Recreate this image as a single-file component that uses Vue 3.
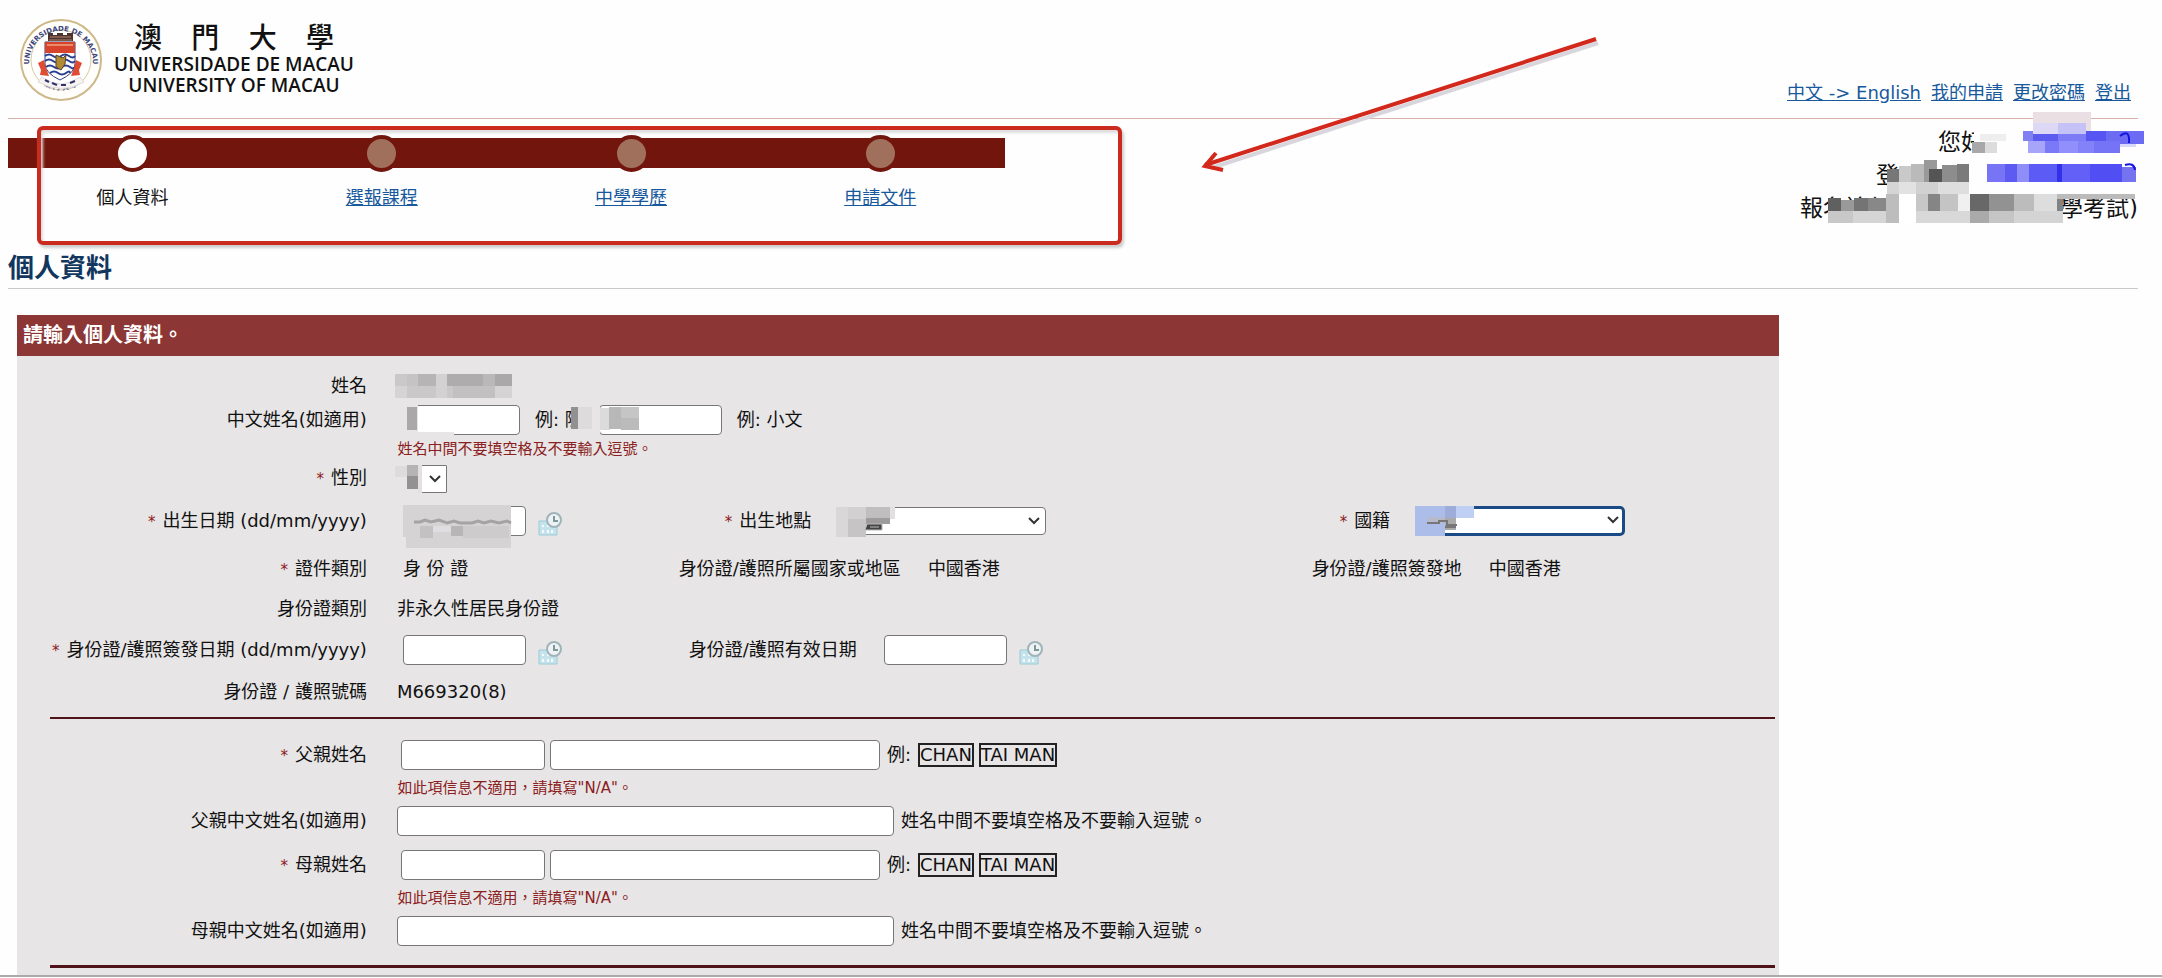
<template>
  <div class="page" lang="zh-Hant">
    <!-- Header with logo and account links -->
    <header class="header">
      <div class="logo">
        <svg class="seal" viewBox="0 0 84 84" aria-hidden="true">
          <defs>
            <path id="seal-top" d="M10 45 A32 32 0 1 1 74 45" />
            <path id="seal-bottom" d="M14 58 A35 35 0 0 0 70 58" />
          </defs>
          <circle cx="42" cy="42" r="40" fill="#fffefa" stroke="#cdb98a" stroke-width="2" />
          <circle cx="42" cy="42" r="30" fill="#fff" stroke="#d8c8a2" stroke-width="1" />
          <text class="seal-latin"><textPath href="#seal-top" startOffset="50%" text-anchor="middle">UNIVERSIDADE DE MACAU</textPath></text>
          <text class="seal-han"><textPath href="#seal-bottom" startOffset="50%" text-anchor="middle">澳 門 大 學</textPath></text>
          <path d="M29 15 h5 v2 h4 v-2 h6 v2 h4 v-2 h6 v8 h-25 z" fill="#4a3330" />
          <path d="M31 19 h21 M30 22 h23" stroke="#b9836b" stroke-width="1" />
          <path d="M26 24 h30 v22 q0 9 -15 16 q-15 -7 -15 -16 z" fill="#fff" stroke="#33407c" />
          <path d="M26 24 h30 v11 h-30 z" fill="#d8432c" />
          <path d="M28 27 h26" stroke="#ec8b6c" stroke-width="2" />
          <path d="M26 38 q4 -3 8 0 t8 0 t8 0 t6 0 M26 43 q4 -3 8 0 t8 0 t8 0 t6 0 M27 49 q4 -3 8 0 t8 0 t8 0 t4 0 M31 55 q4 -3 8 0 t8 0 t4 0" fill="none" stroke="#2b3f92" stroke-width="2" />
          <path d="M37 37 l7 3 l3 -3 l-1 9 l-4 6 l-5 -3 z" fill="#b28a35" stroke="#594222" />
          <path d="M19 45 l6 -3 l2 8 l3 8 l-9 -1 l1 -5 z M63 45 l-6 -3 l-2 8 l-3 8 l9 -1 l-1 -5 z" fill="#df4c31" />
          <path d="M23 59 q18 14 38 0 l4 5 q-22 13 -46 0 z" fill="#f6f3f1" stroke="#dddae0" />
          <path d="M26 62 l4 2 M33 65 l5 2 M42 67 h5 M51 65 l5 -2" stroke="#33336c" stroke-width="2" />
        </svg>
        <div class="logo-text">
          <div class="logo-han">
            <span>澳</span><span>門</span><span>大</span><span>學</span>
          </div>
          <div class="logo-latin">UNIVERSIDADE DE MACAU</div>
          <div class="logo-latin">UNIVERSITY OF MACAU</div>
        </div>
      </div>
      <nav class="links">
        <a v-for="link in links" :key="link" href="#">{{ link }}</a>
      </nav>
    </header>

    <!-- Progress steps and account info -->
    <div class="status">
      <ol class="steps">
        <li v-for="(step, index) in steps" :key="step">
          <span class="track"><span class="dot" :class="{ current: index === 0 }"></span></span>
          <span v-if="index === 0" class="step-name">{{ step }}</span>
          <a v-else class="step-name" href="#">{{ step }}</a>
        </li>
      </ol>
      <div class="account">
        <p class="account-name">您好</p>
        <p class="account-login">登</p>
        <p class="account-exam"><span>報名途徑</span><span>學考試)</span></p>
        <svg class="account-mask" viewBox="0 0 358 112" aria-hidden="true">
          <rect v-for="(c, i) in masks.account" :key="i" :x="c[0]" :y="c[1]" :width="c[2]" :height="c[3]" :fill="c[4]" />
          <path d="M328 24 q10 -8 9 7 M333 53 q9 -3 10 5" fill="none" stroke="#1414e0" stroke-width="2" />
        </svg>
      </div>
    </div>

    <h1 class="title">個人資料</h1>

    <form class="panel" @submit.prevent>
      <h2 class="panel-head">請輸入個人資料。</h2>
      <div class="panel-body">
        <div class="row short">
          <span class="label">姓名</span>
          <div class="value wide">
            <svg class="mask-name" viewBox="0 0 117 24" aria-hidden="true">
              <rect v-for="(c, i) in masks.name" :key="i" :x="c[0]" :y="c[1]" :width="c[2]" :height="c[3]" :fill="c[4]" />
            </svg>
          </div>
        </div>

        <div class="row names">
          <label class="label" for="surname">中文姓名(如適用)</label>
          <div class="value wide">
            <span class="covered">
              <input id="surname" v-model="form.surname" class="w-date" type="text" />
              <svg class="mask" viewBox="0 0 60 40" aria-hidden="true">
                <rect v-for="(c, i) in masks.surname" :key="i" :x="c[0]" :y="c[1]" :width="c[2]" :height="c[3]" :fill="c[4]" />
              </svg>
            </span>
            <span class="example">例: 陳</span>
            <span class="covered given">
              <input v-model="form.givenName" class="w-date" type="text" aria-label="名" />
              <svg class="mask mask-given" viewBox="0 0 80 40" aria-hidden="true">
                <rect v-for="(c, i) in masks.given" :key="i" :x="c[0]" :y="c[1]" :width="c[2]" :height="c[3]" :fill="c[4]" />
              </svg>
            </span>
            <span class="example">例: 小文</span>
          </div>
        </div>
        <p class="hint">姓名中間不要填空格及不要輸入逗號。</p>

        <div class="row names">
          <label class="label" for="gender"><i>*</i>性別</label>
          <div class="value wide">
            <span class="covered select">
              <select id="gender" v-model="form.gender" class="w-gender"><option value=""></option></select>
              <svg class="arrow" viewBox="0 0 14 8" aria-hidden="true"><path d="M2 1 l5 5 l5 -5" /></svg>
              <svg class="mask" viewBox="0 0 60 40" aria-hidden="true">
                <rect v-for="(c, i) in masks.gender" :key="i" :x="c[0]" :y="c[1]" :width="c[2]" :height="c[3]" :fill="c[4]" />
              </svg>
            </span>
          </div>
        </div>

        <div class="row tall">
          <label class="label" for="birth"><i>*</i>出生日期 (dd/mm/yyyy)</label>
          <div class="value indent">
            <span class="covered">
              <input id="birth" v-model="form.birthDate" class="w-date" type="text" />
              <svg class="mask mask-birth" viewBox="0 0 124 50" aria-hidden="true">
                <rect v-for="(c, i) in masks.birth" :key="i" :x="c[0]" :y="c[1]" :width="c[2]" :height="c[3]" :fill="c[4]" />
                <path d="M11 21 h6 l5 -2 l6 2 l8 -2 l8 3 l7 -2 l6 2 h12 l6 -2 l6 2 l7 -2 l8 2 l8 -2 l4 2" fill="none" stroke="#a5a3a4" stroke-width="3" />
              </svg>
            </span>
            <button type="button" class="calendar" aria-label="選擇日期">
              <svg viewBox="0 0 24 24"><path class="cal" d="M1 9 h18 v14 h-18 z" /><path class="cal-dots" d="M5 13 v2 M10 13 v2 M5 18 v3 M10 18 v3 M14 18 v3" /><circle cx="16" cy="8" r="7" /><path class="hand" d="M16 4 v5 h4" /></svg>
            </button>
          </div>
          <div class="segment shift-large">
            <label for="place"><i>*</i>出生地點</label>
            <span class="covered select">
              <select id="place" v-model="form.birthPlace" class="w-place"><option value=""></option></select>
              <svg class="arrow" viewBox="0 0 14 8" aria-hidden="true"><path d="M2 1 l5 5 l5 -5" /></svg>
              <svg class="mask" viewBox="0 0 60 40" aria-hidden="true">
                <rect v-for="(c, i) in masks.place" :key="i" :x="c[0]" :y="c[1]" :width="c[2]" :height="c[3]" :fill="c[4]" />
                <path d="M31 22 h15 v6 h-17 z M34 25 h9" fill="#444" stroke="#bbb" />
              </svg>
            </span>
          </div>
          <div class="segment shift-medium">
            <label for="nation"><i>*</i>國籍</label>
            <span class="covered select">
              <select id="nation" v-model="form.nationality" class="w-place focused"><option value=""></option></select>
              <svg class="arrow" viewBox="0 0 14 8" aria-hidden="true"><path d="M2 1 l5 5 l5 -5" /></svg>
              <svg class="mask" viewBox="0 0 60 40" aria-hidden="true">
                <rect v-for="(c, i) in masks.nation" :key="i" :x="c[0]" :y="c[1]" :width="c[2]" :height="c[3]" :fill="c[4]" />
                <path d="M12 22 h12 v-2 h8 v4 h10 M30 26 h11" fill="none" stroke="#777" stroke-width="2" />
              </svg>
            </span>
          </div>
        </div>

        <div class="row tall">
          <span class="label"><i>*</i>證件類別</span>
          <div class="value indent">身 份 證</div>
          <div class="segment"><span>身份證/護照所屬國家或地區</span><span>中國香港</span></div>
          <div class="segment"><span>身份證/護照簽發地</span><span>中國香港</span></div>
        </div>

        <div class="row short">
          <span class="label">身份證類別</span>
          <div class="value wide">非永久性居民身份證</div>
        </div>

        <div class="row tall dates">
          <label class="label" for="issue"><i>*</i>身份證/護照簽發日期 (dd/mm/yyyy)</label>
          <div class="value indent">
            <input id="issue" v-model="form.issueDate" class="w-date" type="text" />
            <button type="button" class="calendar" aria-label="選擇日期">
              <svg viewBox="0 0 24 24"><path class="cal" d="M1 9 h18 v14 h-18 z" /><path class="cal-dots" d="M5 13 v2 M10 13 v2 M5 18 v3 M10 18 v3 M14 18 v3" /><circle cx="16" cy="8" r="7" /><path class="hand" d="M16 4 v5 h4" /></svg>
            </button>
          </div>
          <div class="segment shift-small">
            <label for="expiry">身份證/護照有效日期</label>
            <span class="date-box">
              <input id="expiry" v-model="form.expiryDate" class="w-date" type="text" />
              <button type="button" class="calendar" aria-label="選擇日期">
                <svg viewBox="0 0 24 24"><path class="cal" d="M1 9 h18 v14 h-18 z" /><path class="cal-dots" d="M5 13 v2 M10 13 v2 M5 18 v3 M10 18 v3 M14 18 v3" /><circle cx="16" cy="8" r="7" /><path class="hand" d="M16 4 v5 h4" /></svg>
              </button>
            </span>
          </div>
        </div>

        <div class="row short">
          <span class="label">身份證 / 護照號碼</span>
          <div class="value wide">M669320(8)</div>
        </div>

        <hr />

        <!-- Parents -->
        <template v-for="parent in parents" :key="parent.id">
          <div class="row parent">
            <label class="label" :for="parent.id"><i>*</i>{{ parent.title }}姓名</label>
            <div class="value wide parent-name">
              <input :id="parent.id" v-model="parent.surname" class="w-surname" type="text" />
              <input v-model="parent.givenName" class="w-given" type="text" :aria-label="parent.title + '名'" />
              <span class="parent-example">例:</span>
              <span class="sample">CHAN</span>
              <span class="sample">TAI MAN</span>
            </div>
          </div>
          <p class="hint">如此項信息不適用，請填寫"N/A"。</p>
          <div class="row parent">
            <label class="label" :for="parent.id + '-zh'">{{ parent.title }}中文姓名(如適用)</label>
            <div class="value wide">
              <input :id="parent.id + '-zh'" v-model="parent.chineseName" class="w-full" type="text" />
              <span class="note">姓名中間不要填空格及不要輸入逗號。</span>
            </div>
          </div>
        </template>

        <hr class="last" />
      </div>
    </form>

    <!-- Red marking around the steps -->
    <div class="highlight"></div>
    <svg class="pointer" viewBox="0 0 410 150" aria-hidden="true">
      <path class="pointer-shadow" d="M401 15 L14 140" />
      <path d="M399 11 L8 137" />
      <path d="M19 125 L8 138 L26 142" />
    </svg>
  </div>
</template>

<script setup>
import { reactive, ref } from 'vue';

const links = ['中文 -> English', '我的申請', '更改密碼', '登出'];
const steps = ['個人資料', '選報課程', '中學學歷', '申請文件'];

const form = reactive({
  surname: '',
  givenName: '',
  gender: '',
  birthDate: '',
  birthPlace: '',
  nationality: '',
  issueDate: '',
  expiryDate: ''
});

const parents = ref([
  { id: 'father', title: '父親', surname: '', givenName: '', chineseName: '' },
  { id: 'mother', title: '母親', surname: '', givenName: '', chineseName: '' }
]);

// Mosaic cells over private data: x, y, width, height, colour
const masks = {
  account: [
    [241, 0, 58, 23, '#eadfe2'], [241, 11, 25, 12, '#dcd8f6'], [266, 11, 28, 12, '#c5c2f7'],
    [182, 20, 17, 14, '#fff'], [188, 22, 26, 7, '#eee'], [180, 30, 13, 11, '#a8a8a8'], [193, 30, 12, 11, '#dcdcdc'],
    [231, 19, 10, 10, '#8180f3'], [241, 22, 25, 8, '#5c5bf0'], [266, 22, 28, 8, '#7d7cf6'], [294, 19, 20, 10, '#5756f2'], [314, 19, 38, 13, '#6c6bf4'], [318, 32, 26, 3, '#d8d8fb'],
    [236, 29, 17, 12, '#a7a5fa'], [253, 29, 14, 12, '#7b79f8'], [267, 29, 19, 12, '#918ffb'], [286, 29, 16, 12, '#8482f9'], [302, 29, 26, 12, '#7674f6'],
    [95, 57, 12, 13, '#777'], [107, 54, 12, 16, '#c9c9c9'], [119, 52, 18, 18, '#bababa'], [132, 48, 13, 22, '#999'], [137, 57, 13, 13, '#555'], [150, 53, 20, 17, '#8d8d8d'], [165, 52, 12, 18, '#7b7b7b'],
    [195, 52, 18, 18, '#7775f5'], [213, 52, 12, 18, '#5c5af1'], [225, 52, 12, 18, '#8f8df8'], [237, 52, 28, 18, '#5d5bf5'], [265, 52, 5, 18, '#3230e8'], [270, 52, 28, 18, '#6260f7'], [298, 52, 32, 18, '#514ff4'], [330, 55, 14, 15, '#7573ef'],
    [95, 70, 12, 15, '#d5d5d5'], [107, 70, 17, 12, '#e2e2e2'], [124, 70, 22, 12, '#d1d1d1'], [146, 70, 31, 12, '#dedede'],
    [36, 86, 13, 13, '#606060'], [49, 88, 13, 11, '#999'], [62, 86, 14, 13, '#747474'], [76, 86, 18, 13, '#888'], [94, 82, 13, 29, '#bdbdbd'],
    [36, 99, 25, 12, '#c8c8c8'], [61, 99, 33, 12, '#d5d5d5'], [107, 82, 17, 29, '#fff'], [124, 82, 12, 17, '#c7c7c7'], [136, 82, 12, 17, '#858585'], [148, 82, 18, 17, '#c4c4c4'], [166, 82, 12, 17, '#f0f0f0'], [124, 99, 54, 12, '#d8d8d8'],
    [178, 82, 19, 17, '#686868'], [197, 82, 25, 17, '#929292'], [222, 82, 20, 17, '#bcbcbc'], [242, 82, 24, 17, '#ddd'], [265, 82, 78, 5, '#bbb'], [265, 87, 6, 14, '#828282'],
    [178, 99, 19, 12, '#aaa'], [197, 99, 25, 12, '#c5c5c5'], [222, 99, 49, 12, '#d4d4d4']
  ],
  name: [
    [0, 0, 117, 24, '#cac8c9'], [12, 0, 11, 12, '#c5c3c4'], [23, 0, 18, 12, '#b6b4b5'], [41, 0, 11, 24, '#d3d1d2'], [52, 0, 36, 12, '#aeacad'],
    [88, 0, 12, 12, '#bab8b9'], [100, 0, 17, 12, '#aaa8a9'], [0, 12, 12, 12, '#d5d3d4'], [58, 12, 42, 12, '#c2c0c1'], [100, 12, 17, 12, '#d5d3d4']
  ],
  surname: [[0, 0, 23, 40, '#e7e5e6'], [12, 7, 10, 23, '#aaa8a9'], [23, 30, 36, 10, '#e7e5e6'], [23, 29, 36, 3, '#fff']],
  given: [[0, 7, 7, 22, '#929192'], [7, 7, 14, 22, '#dddbdc'], [21, 4, 8, 30, '#e7e5e6'], [29, 8, 10, 22, '#dcdbdc'], [38, 7, 12, 22, '#b9b8b9'], [50, 7, 18, 11, '#c6c5c6'], [50, 18, 18, 12, '#bcbbbc']],
  gender: [[0, 0, 26, 40, '#e7e5e6'], [0, 6, 12, 11, '#dddbdc'], [12, 5, 11, 11, '#b5b3b4'], [12, 16, 11, 13, '#939192'], [23, 5, 4, 28, '#e2e0e1']],
  birth: [[0, 4, 108, 32, '#d5d3d4'], [3, 30, 105, 17, '#d5d3d4'], [17, 25, 13, 12, '#c3c1c2'], [30, 25, 18, 6, '#dfdddf'], [48, 25, 12, 10, '#b7b5b6'], [60, 25, 46, 12, '#cdcbcc']],
  place: [[0, 5, 12, 30, '#d9d7d8'], [12, 5, 18, 12, '#d2d0d1'], [12, 17, 18, 18, '#c6c4c5'], [30, 5, 24, 11, '#c0bebf'], [30, 16, 24, 6, '#9d9b9c'], [54, 5, 5, 12, '#e2e0e1']],
  nation: [[0, 5, 30, 30, '#acbde9'], [12, 16, 18, 6, '#b5bbcc'], [30, 5, 11, 15, '#9dacd8'], [30, 17, 11, 12, '#aaa'], [41, 5, 18, 12, '#c0cff4']]
};
</script>

<style>
body {
  margin: 0;
  background-color: #fefefe;
}
</style>

<style scoped>
.page {
  position: relative;
  padding: 0 24px 0 8px;
  border-bottom: 2px solid #aaa;
  font-family: "DejaVu Sans", "Noto Sans CJK TC", sans-serif;
  font-size: 18px;
  line-height: 22px;
  color: #111;
}

* {
  box-sizing: border-box;
}

a {
  color: #17599c;
}

/* Header */
.header {
  display: flex;
  justify-content: space-between;
  align-items: flex-end;
  height: 119px;
  border-bottom: 1px solid #d9aeab;
}

.logo {
  display: flex;
  align-items: center;
  gap: 8px;
  padding: 0 0 16px 11px;
}

.seal {
  width: 84px;
  height: 84px;
}

.seal-latin {
  font-size: 7px;
  font-weight: bold;
  fill: #3d4680;
}

.seal-han {
  font-size: 7px;
  font-weight: bold;
  fill: #5a6192;
}

.logo-text {
  width: 246px;
  text-align: center;
}

.logo-han {
  display: flex;
  justify-content: space-between;
  padding: 0 23px;
  font-size: 28px;
  font-weight: 500;
  line-height: 30px;
}

.logo-latin {
  font-family: "Open Sans", sans-serif;
  font-size: 19px;
  font-weight: 600;
  line-height: 21px;
  white-space: nowrap;
}

.links {
  display: flex;
  gap: 10px;
  padding: 0 7px 14px 0;
}

/* Steps */
.status {
  display: flex;
  justify-content: space-between;
}

.steps {
  display: flex;
  width: 46.8%;
  margin: 19px 0 0;
  padding: 0;
  list-style: none;
}

.steps li {
  flex: 1;
  text-align: center;
}

.track {
  display: flex;
  align-items: center;
  justify-content: center;
  height: 30px;
  margin-bottom: 19px;
  background-color: #72150d;
}

.dot {
  flex: none;
  width: 37px;
  height: 37px;
  border: 4px solid #72150d;
  border-radius: 50%;
  background-color: #a1705c;
}

.dot.current {
  background-color: #fff;
}

/* Account info */
.account {
  position: relative;
  width: 338px;
  padding-top: 7px;
  font-size: 23px;
  line-height: 33px;
}

.account p {
  margin: 0;
}

.account-name {
  padding-left: 138px;
}

.account-login {
  padding-left: 76px;
}

.account-exam {
  display: flex;
  justify-content: space-between;
}

.account-mask {
  position: absolute;
  top: -7px;
  left: -8px;
  width: 358px;
  height: 112px;
}

.title {
  margin: 30px 0 26px;
  padding-bottom: 7px;
  border-bottom: 1px solid #c9c9c9;
  font-size: 26px;
  line-height: 26px;
  color: #12375f;
}

/* Form panel */
.panel {
  width: 82.7%;
  margin-left: 9px;
  background-color: #e7e5e6;
}

.panel-head {
  margin: 0;
  padding: 0 6px;
  background-color: #8c3635;
  font-size: 20px;
  line-height: 41px;
  color: #fff;
}

.panel-body {
  padding: 14px 0 7px;
}

.row {
  display: grid;
  grid-template-columns: 350fr 312fr 633fr 467fr;
  align-items: center;
}

.short {
  min-height: 31px;
}

.names {
  min-height: 37px;
}

.tall {
  min-height: 48px;
}

.dates {
  min-height: 52px;
}

.parent {
  min-height: 44px;
}

.label {
  text-align: right;
  white-space: nowrap;
}

.value {
  display: flex;
  align-items: center;
  padding-left: 30px;
  white-space: nowrap;
}

.wide {
  grid-column: 2 / -1;
}

.indent {
  padding-left: 36px;
}

.segment {
  display: flex;
  align-items: center;
  gap: 27px;
  white-space: nowrap;
}

.shift-large {
  padding-left: 46px;
}

.shift-medium {
  padding-left: 28px;
}

.shift-small {
  padding-left: 10px;
}

i {
  margin-right: 7px;
  font-size: 15px;
  font-style: normal;
  color: #8b1a1a;
}

.hint {
  margin: 0;
  padding-left: calc(19.9% + 30px);
  font-size: 15px;
  line-height: 22px;
  color: #8b2020;
}

input,
select {
  height: 30px;
  margin: 0;
  padding: 2px 6px;
  border: 1px solid #777;
  border-radius: 4px;
  background-color: #fff;
  font: inherit;
}

select {
  height: 28px;
  appearance: none;
}

.focused {
  height: 30px;
  border: 3px solid #1b4b87;
  border-radius: 5px;
}

.w-date {
  width: 123px;
}

.w-gender {
  width: 50px;
  border-radius: 1px;
}

.w-place {
  width: 208px;
}

.w-surname {
  width: 144px;
}

.w-given {
  width: 330px;
}

.w-full {
  width: 497px;
}

.covered {
  position: relative;
  display: flex;
}

.mask {
  position: absolute;
  top: -5px;
  left: -2px;
  width: 60px;
  height: 40px;
}

.mask-given {
  left: -28px;
  width: 80px;
}

.mask-birth {
  left: 0;
  width: 124px;
  height: 50px;
}

.mask-name {
  width: 117px;
  height: 24px;
  margin-left: -2px;
}

.arrow {
  position: absolute;
  top: 10px;
  right: 5px;
  width: 14px;
  height: 8px;
  fill: none;
  stroke: #333;
  stroke-width: 2;
  pointer-events: none;
}

.example {
  margin-left: 15px;
}

.given {
  margin-left: 16px;
}

.calendar {
  width: 24px;
  height: 24px;
  margin: 6px 0 0 12px;
  padding: 0;
  border: 0;
  background: none;
}

.calendar svg {
  display: block;
}

.cal {
  fill: #c4e3eb;
  stroke: #9ccbd8;
}

.cal-dots {
  stroke: #f5fbfc;
  stroke-width: 2;
}

.calendar circle {
  fill: #eef2f2;
  stroke: #9fb4ba;
  stroke-width: 2;
}

.hand {
  fill: none;
  stroke: #7d979e;
  stroke-width: 2;
}

.date-box {
  display: flex;
  align-items: center;
}

.parent-name {
  gap: 5px;
  padding-left: 34px;
}

.parent-example {
  margin: 0 2px;
}

.sample {
  border: 2px solid #222;
  line-height: 20px;
}

.note {
  margin-left: 7px;
}

hr {
  height: 2px;
  margin: 10px 4px 14px 33px;
  border: 0;
  background-color: #4f1419;
}

hr.last {
  height: 3px;
  margin: 12px 4px 0 33px;
}

/* Red marking */
.highlight {
  position: absolute;
  top: 126px;
  left: 37px;
  width: 1085px;
  height: 119px;
  border: 4px solid #cb2a1f;
  border-radius: 6px;
  box-shadow: 2px 3px 3px #ccc, inset 2px 3px 3px #ddd;
  pointer-events: none;
}

.pointer {
  position: absolute;
  top: 28px;
  left: 1197px;
  width: 410px;
  height: 150px;
  fill: none;
  stroke: #d3291d;
  stroke-width: 4;
  pointer-events: none;
}

.pointer .pointer-shadow {
  stroke: #d8d6dc;
}
</style>
